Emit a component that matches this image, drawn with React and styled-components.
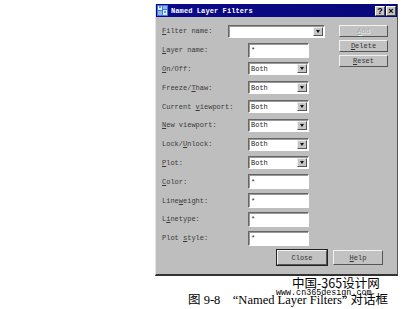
import React from 'react'
import styled, { createGlobalStyle } from 'styled-components'

const Global = createGlobalStyle`
  html, body { margin: 0; padding: 0; background: #fff; }
  body { width: 404px; height: 309px; overflow: hidden; }
`

const Page = styled.div`
  width: 404px;
  height: 309px;
  display: flex;
  flex-direction: column;
  align-items: flex-start;
`

const Dialog = styled.div`
  margin: 4px 0 0 155px;
  width: 243px;
  height: 272px;
  box-sizing: border-box;
  background: #bebebe;
  border-right: 1px solid #555;
  border-bottom: 2px solid #333;
  border-left: 1px solid #e4e4e4;
  display: flex;
  flex-direction: column;
  font-family: "Liberation Mono", "DejaVu Sans Mono", monospace;
  font-size: 7px;
  color: #333;
`

const TitleBar = styled.div`
  height: 13px;
  background: linear-gradient(90deg, #0a0a8c, #08087a);
  display: flex;
  align-items: center;
  padding: 0 1px 0 1px;
  gap: 3px;
  color: #fff;
  font-weight: bold;
`

const TitleText = styled.span`
  flex: 1;
  letter-spacing: 0.1px;
`

const CapButton = styled.div`
  width: 10px;
  height: 10px;
  box-sizing: border-box;
  background: #c4c4c4;
  border: 1px solid;
  border-color: #fff #444 #444 #fff;
  color: #000;
  font-family: "Liberation Sans", Arial, sans-serif;
  font-weight: bold;
  font-size: 9px;
  line-height: 8px;
  text-align: center;
  margin-left: ${p => p.gap || 0}px;
`

const Body = styled.div`
  flex: 1;
  display: flex;
  padding: 5px 0 0 6px;
`

const Form = styled.div`
  display: grid;
  grid-template-columns: 66px auto;
  grid-auto-rows: 18.8px;
  align-items: center;
  width: 170px;
`

const Label = styled.span`
  white-space: nowrap;
  color: #3a3a3a;
  u { text-decoration: underline; text-underline-offset: 1px; }
`

const Field = styled.div`
  margin-left: ${p => p.wide ? 0 : 20}px;
  width: ${p => p.wide ? 97 : 61}px;
  height: ${p => p.tall ? 15 : 13}px;
  box-sizing: border-box;
  background: #fff;
  border: 1px solid;
  border-color: #666 #fff #fff #666;
  box-shadow: inset 1px 1px 0 #999;
  display: flex;
  align-items: center;
  padding-left: 2px;
  color: #222;
`

const FieldText = styled.span`
  flex: 1;
`

const Arrow = styled.div`
  width: 10px;
  height: 9px;
  margin-right: 1px;
  box-sizing: border-box;
  background: #c6c6c6;
  border: 1px solid;
  border-color: #eee #555 #555 #eee;
  display: flex;
  align-items: center;
  justify-content: center;
  &::after {
    content: "";
    border-left: 2.5px solid transparent;
    border-right: 2.5px solid transparent;
    border-top: 3px solid #111;
  }
`

const Side = styled.div`
  display: flex;
  flex-direction: column;
  gap: 3px;
  margin: 3px 0 0 7px;
`

const Button = styled.div`
  width: ${p => p.w || 49}px;
  height: ${p => p.h || 12}px;
  box-sizing: border-box;
  background: #c2c2c2;
  border: 1px solid;
  border-color: #f2f2f2 #555 #555 #f2f2f2;
  outline: ${p => p.def ? '1px solid #222' : 'none'};
  display: flex;
  align-items: center;
  justify-content: center;
  color: ${p => p.disabled ? '#a8a8a8' : '#333'};
  text-shadow: ${p => p.disabled ? '1px 1px 0 #eee' : 'none'};
  u { text-decoration: underline; text-underline-offset: 1px; }
`

const Footer = styled.div`
  display: flex;
  justify-content: flex-end;
  gap: 6px;
  padding: 0 14px 9px 0;
`

const Caption = styled.div`
  position: relative;
  width: 404px;
  height: 33px;
`

const Site = styled.div`
  position: absolute;
  left: 292px;
  top: 0px;
  font-family: "Noto Sans CJK SC", sans-serif;
  font-size: 12.5px;
  line-height: 14px;
  color: #000;
`

const Watermark = styled.div`
  position: absolute;
  left: 276px;
  top: 12px;
  font-family: "Liberation Mono", monospace;
  font-size: 8.4px;
  line-height: 10px;
  color: #000;
`

const Figure = styled.div`
  position: absolute;
  left: 188px;
  top: 15px;
  font-family: "Liberation Serif", "Noto Sans CJK SC", serif;
  font-size: 12.5px;
  line-height: 15px;
  color: #000;
  white-space: nowrap;
  span { font-family: "Noto Sans CJK SC", sans-serif; }
`

const AppIcon = () => (
  <svg width="11" height="11" viewBox="0 0 11 11">
    <rect x="0" y="0" width="11" height="11" fill="#3a7ad8" />
    <rect x="1" y="1" width="4" height="4" fill="#dfe9ff" />
    <rect x="6" y="1" width="4" height="3" fill="#8fb6ee" />
    <rect x="1" y="6" width="4" height="4" fill="#8fb6ee" />
    <rect x="6" y="5" width="4" height="5" fill="#dfe9ff" />
    <path d="M2 2h2M7 7h2" stroke="#1a3fa0" strokeWidth="1" />
  </svg>
)

const rows = [
  { label: <><u>F</u>ilter name:</>, kind: 'combo' },
  { label: <><u>L</u>ayer name:</>, kind: 'text' },
  { label: <><u>O</u>n/Off:</>, kind: 'select' },
  { label: <>Freeze/<u>T</u>haw:</>, kind: 'select' },
  { label: <>Current <u>v</u>iewport:</>, kind: 'select' },
  { label: <><u>N</u>ew viewport:</>, kind: 'select' },
  { label: <>Lock/<u>U</u>nlock:</>, kind: 'select' },
  { label: <><u>P</u>lot:</>, kind: 'select' },
  { label: <><u>C</u>olor:</>, kind: 'text' },
  { label: <>Line<u>w</u>eight:</>, kind: 'text' },
  { label: <>L<u>i</u>netype:</>, kind: 'text' },
  { label: <>Plot <u>s</u>tyle:</>, kind: 'text' },
]

function Control({ kind }) {
  if (kind === 'combo') {
    return <Field wide><FieldText /><Arrow /></Field>
  }
  if (kind === 'select') {
    return <Field><FieldText>Both</FieldText><Arrow /></Field>
  }
  return <Field tall><FieldText>*</FieldText></Field>
}

export default function App() {
  return (
    <Page>
      <Global />
      <Dialog>
        <TitleBar>
          <AppIcon />
          <TitleText>Named Layer Filters</TitleText>
          <CapButton>?</CapButton>
          <CapButton gap={-2}>×</CapButton>
        </TitleBar>
        <Body>
          <Form>
            {rows.map((r, i) => (
              <React.Fragment key={i}>
                <Label>{r.label}</Label>
                <Control kind={r.kind} />
              </React.Fragment>
            ))}
          </Form>
          <Side>
            <Button disabled><u>A</u>dd</Button>
            <Button><u>D</u>elete</Button>
            <Button><u>R</u>eset</Button>
          </Side>
        </Body>
        <Footer>
          <Button w={50} h={15} def>Close</Button>
          <Button w={50} h={15}><u>H</u>elp</Button>
        </Footer>
      </Dialog>
      <Caption>
        <Site>中国-365设计网</Site>
        <Figure><span>图</span> 9-8&nbsp;&nbsp;&nbsp;&nbsp;“Named Layer Filters” <span>对话框</span></Figure>
        <Watermark>www.cn365design.com</Watermark>
      </Caption>
    </Page>
  )
}
